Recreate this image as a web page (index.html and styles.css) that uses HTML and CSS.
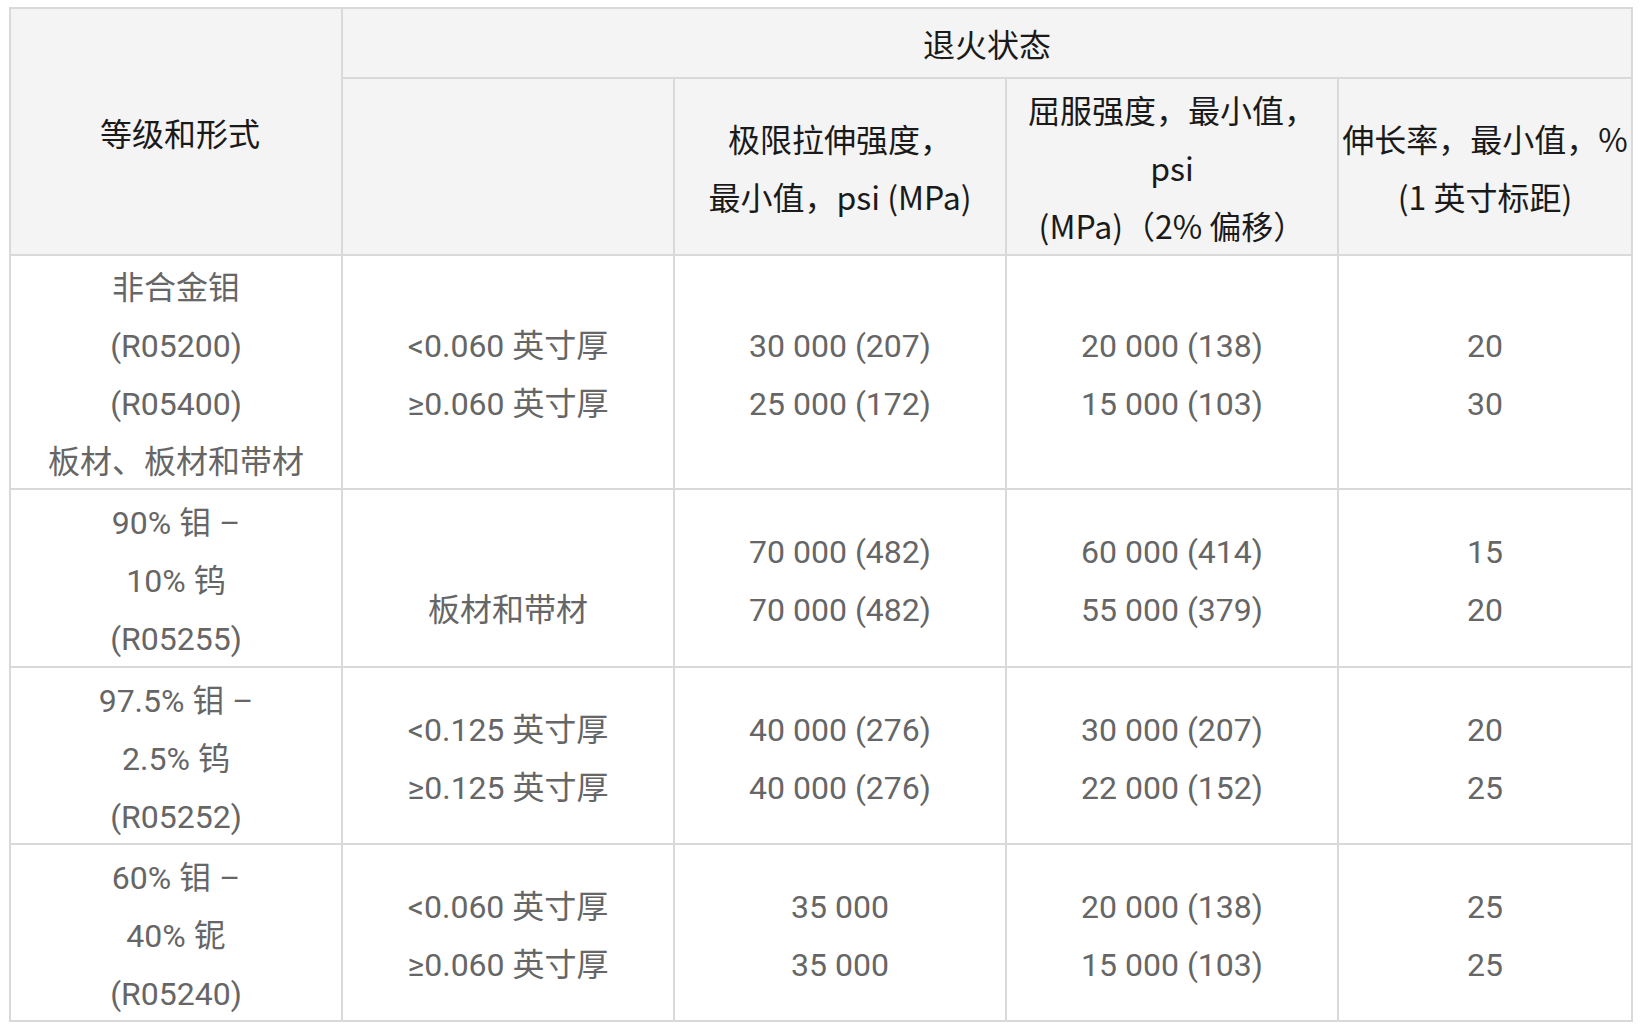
FILE: index.html
```html
<!DOCTYPE html>
<html lang="zh-CN">
<head>
<meta charset="utf-8">
<title>退火状态</title>
<link rel="stylesheet" href="styles.css">
</head>
<body>
<table class="spec">
  <colgroup>
    <col class="c-wide"><col class="c-wide"><col class="c-wide"><col class="c-wide"><col class="c-last">
  </colgroup>
  <thead>
    <tr class="h1">
      <th rowspan="2" class="first">等级和形式</th>
      <th colspan="4">退火状态</th>
    </tr>
    <tr class="h2">
      <th></th>
      <th>极限拉伸强度，<br>最小值，psi (MPa)</th>
      <th>屈服强度，最小值，<br>psi<br>(MPa)（2% 偏移）</th>
      <th>伸长率，最小值，%<br>(1 英寸标距)</th>
    </tr>
  </thead>
  <tbody>
    <tr class="r1">
      <td><div class="cell">非合金钼<br>(R05200)<br>(R05400)<br>板材、板材和带材</div></td>
      <td><div class="cell">&lt;0.060 英寸厚<br>≥0.060 英寸厚</div></td>
      <td><div class="cell">30 000 (207)<br>25 000 (172)</div></td>
      <td><div class="cell">20 000 (138)<br>15 000 (103)</div></td>
      <td><div class="cell">20<br>30</div></td>
    </tr>
    <tr class="r2">
      <td><div class="cell">90% 钼 –<br>10% 钨<br>(R05255)</div></td>
      <td><div class="cell"><br>板材和带材</div></td>
      <td><div class="cell">70 000 (482)<br>70 000 (482)</div></td>
      <td><div class="cell">60 000 (414)<br>55 000 (379)</div></td>
      <td><div class="cell">15<br>20</div></td>
    </tr>
    <tr class="r3">
      <td><div class="cell">97.5% 钼 –<br>2.5% 钨<br>(R05252)</div></td>
      <td><div class="cell">&lt;0.125 英寸厚<br>≥0.125 英寸厚</div></td>
      <td><div class="cell">40 000 (276)<br>40 000 (276)</div></td>
      <td><div class="cell">30 000 (207)<br>22 000 (152)</div></td>
      <td><div class="cell">20<br>25</div></td>
    </tr>
    <tr class="r4">
      <td><div class="cell">60% 钼 –<br>40% 铌<br>(R05240)</div></td>
      <td><div class="cell">&lt;0.060 英寸厚<br>≥0.060 英寸厚</div></td>
      <td><div class="cell">35 000<br>35 000</div></td>
      <td><div class="cell">20 000 (138)<br>15 000 (103)</div></td>
      <td><div class="cell">25<br>25</div></td>
    </tr>
  </tbody>
</table>
</body>
</html>
```

FILE: styles.css
```css
html, body {
  margin: 0;
  padding: 0;
  background: #ffffff;
}

.spec {
  margin: 7px 0 0 9px;
  width: 1624px;
  table-layout: fixed;
  border-collapse: separate;
  border-spacing: 0;
  border-left: 2px solid #d9d9d9;
  border-top: 2px solid #d9d9d9;
  font-size: 32px;
  line-height: 58px;
}

.c-wide { width: 332px; }
.c-last { width: 294px; }

.spec th,
.spec td {
  border-right: 2px solid #d9d9d9;
  border-bottom: 2px solid #d9d9d9;
  padding: 0;
  text-align: center;
  vertical-align: middle;
  white-space: nowrap;
}

.spec th {
  background: #f4f4f4;
  color: #1a1a1a;
  font-family: "Noto Sans CJK SC", sans-serif;
  font-weight: 400;
}

.spec th.first {
  padding-left: 8px;
}

.spec td {
  background: #ffffff;
  color: #666666;
  font-family: Roboto, "Noto Sans CJK SC", sans-serif;
}

.cell {
  padding-top: 3px;
  margin-bottom: -3px;
}

.h1 { height: 70px; }
.h2 { height: 177px; }
.r1 { height: 234px; }
.r2 { height: 178px; }
.r3 { height: 177px; }
.r4 { height: 177px; }
```
